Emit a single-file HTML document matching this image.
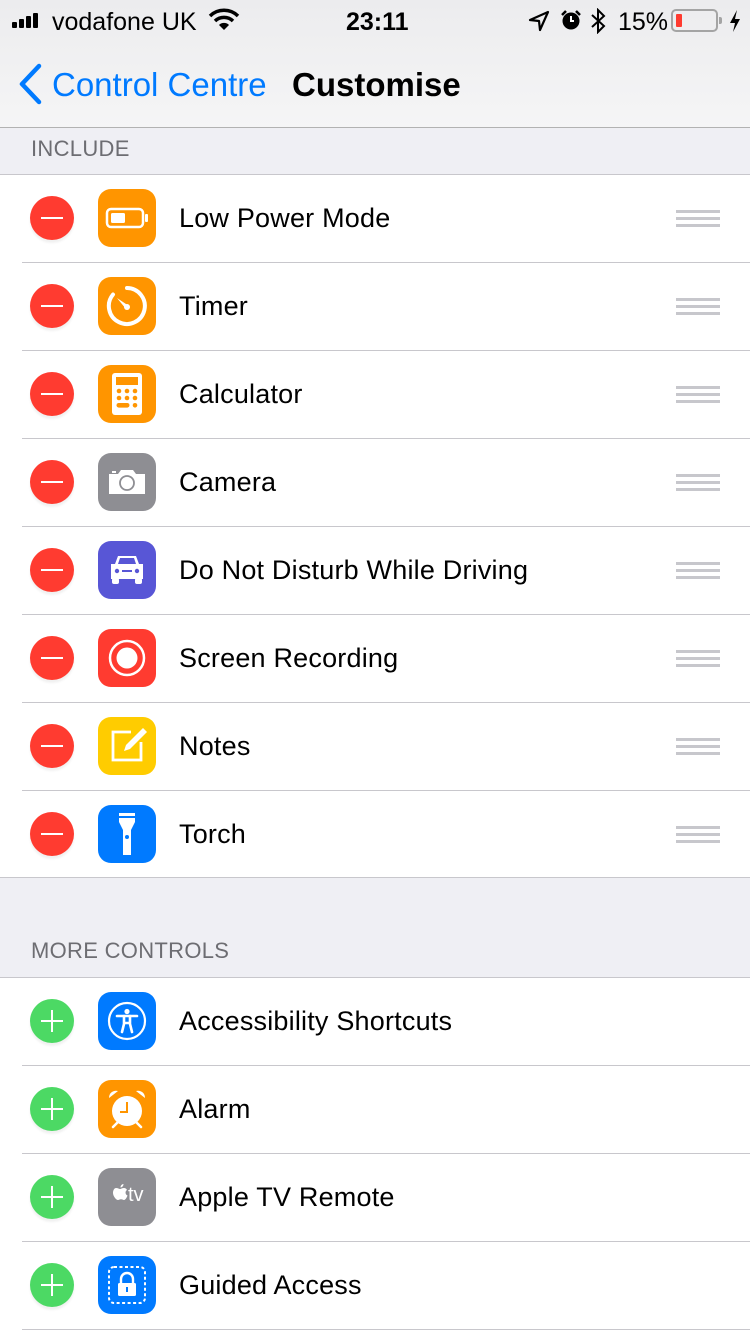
<!DOCTYPE html>
<html><head><meta charset="utf-8"><style>
*{margin:0;padding:0;box-sizing:border-box}
body{width:750px;height:1334px;overflow:hidden;position:relative;background:#efeff4;font-family:"Liberation Sans",sans-serif}
.abs{position:absolute}
.nav{left:0;top:0;width:750px;height:128px;background:linear-gradient(#ececee,#f5f5f6);border-bottom:1px solid #b2b2b2}
.sec{left:0;width:750px;background:#fff}
.row{position:absolute;left:0;width:750px;height:88px}
.row .sep{position:absolute;left:22px;right:0;bottom:0;height:1px;background:#c8c7cc}
.btn{position:absolute;left:30px;top:21px;width:44px;height:44px;border-radius:50%;box-shadow:0 3px 2px rgba(0,0,0,0.06)}
.minus{background:#ff3b30}
.minus:after{content:"";position:absolute;left:11px;top:21px;width:22px;height:2px;background:#fff}
.plus{background:#4cd964}
.plus:before{content:"";position:absolute;left:11px;top:21px;width:22px;height:2px;background:#fff}
.plus:after{content:"";position:absolute;left:21px;top:11px;width:2px;height:22px;background:#fff}
.ic{position:absolute;left:98px;top:14px;width:58px;height:58px;border-radius:13px;overflow:hidden}
.ic svg{width:58px;height:58px}
.lbl{position:absolute;left:179px;top:28px;font-size:27px;color:#000;letter-spacing:0.2px}
.drag{position:absolute;left:676px;top:35px;width:44px;height:17px;background:linear-gradient(#c7c7cc 0 3px,transparent 3px 7px,#c7c7cc 7px 10px,transparent 10px 14px,#c7c7cc 14px 17px)}
.hdr{left:31px;font-size:22px;color:#6d6d72;letter-spacing:0.3px}
</style></head><body>
<div class="abs nav"></div>
<div class="abs" style="left:12px;top:13px">
<svg width="36" height="16"><rect x="0" y="9" width="5" height="6" rx="1" fill="#000"/><rect x="7" y="6" width="5" height="9" rx="1" fill="#000"/><rect x="14" y="3" width="5" height="12" rx="1" fill="#000"/><rect x="21" y="0" width="5" height="15" rx="1" fill="#000"/></svg></div>
<div class="abs" style="left:52px;top:8px;font-size:25px;color:#000">vodafone UK</div>
<div class="abs" style="left:208px;top:8px"><svg width="32" height="24" viewBox="0 0 32 24"><path d="M2 8 A20 20 0 0 1 30 8" stroke="#000" stroke-width="3.5" fill="none"/><path d="M7 13 A13 13 0 0 1 25 13" stroke="#000" stroke-width="3.5" fill="none"/><path d="M16 22 L11 17 A7 7 0 0 1 21 17 Z" fill="#000"/></svg></div>
<div class="abs" style="left:346px;top:8px;font-size:25px;font-weight:bold;color:#000">23:11</div>
<div class="abs" style="left:528px;top:10px"><svg width="22" height="22" viewBox="0 0 22 22"><path d="M20 2 L2 10 L11 11 L12 20 Z" fill="none" stroke="#000" stroke-width="2.2" stroke-linejoin="round"/></svg></div>
<div class="abs" style="left:560px;top:9px"><svg width="22" height="22" viewBox="0 0 22 22"><circle cx="11" cy="12" r="8.5" fill="#000"/><path d="M11 7 V12 H14" stroke="#fff" stroke-width="2" fill="none"/><path d="M2 6 L6 2 M20 6 L16 2" stroke="#000" stroke-width="2.5"/></svg></div>
<div class="abs" style="left:589px;top:8px"><svg width="18" height="26" viewBox="0 0 18 26"><path d="M3 7 L15 18 L9 24 V2 L15 8 L3 19" stroke="#000" stroke-width="2" fill="none"/></svg></div>
<div class="abs" style="left:618px;top:8px;font-size:25px;color:#000">15%</div>
<div class="abs" style="left:671px;top:9px;width:47px;height:23px;border:2px solid #a4a4a4;border-radius:5px"><div style="position:absolute;left:3px;top:3px;width:6px;height:13px;background:#ff3b30;border-radius:1px"></div></div>
<div class="abs" style="left:719px;top:17px;width:3px;height:7px;background:#a4a4a4;border-radius:0 2px 2px 0"></div>
<div class="abs" style="left:728px;top:9px"><svg width="14" height="24" viewBox="0 0 14 24"><path d="M9 1 L2 14 H7 L5 23 L12 10 H7 Z" fill="#000"/></svg></div>
<div class="abs" style="left:16px;top:62px"><svg width="28" height="44" viewBox="0 0 28 44"><path d="M23 4 L6 22 L23 40" stroke="#007aff" stroke-width="4.5" fill="none" stroke-linecap="round" stroke-linejoin="round"/></svg></div>
<div class="abs" style="left:52px;top:66px;font-size:33px;color:#007aff">Control Centre</div>
<div class="abs" style="left:292px;top:66px;font-size:33px;color:#000;font-weight:bold">Customise</div>
<div class="abs hdr" style="top:136px">INCLUDE</div>
<div class="abs" style="left:0;top:174px;width:750px;height:1px;background:#c8c7cc"></div>
<div class="abs sec" style="top:175px;height:702px"></div>
<div class="abs" style="left:0;top:877px;width:750px;height:1px;background:#c8c7cc"></div>
<div class="abs hdr" style="top:938px">MORE CONTROLS</div>
<div class="abs" style="left:0;top:977px;width:750px;height:1px;background:#c8c7cc"></div>
<div class="abs sec" style="top:978px;height:356px"></div>

<div class="row" style="top:175px"><div class="btn minus"></div><div class="ic" style="background:#ff9500"><svg viewBox="0 0 58 58"><rect x="9" y="20" width="36" height="18" rx="4" fill="none" stroke="#fff" stroke-width="2.5"/><rect x="13" y="24" width="14" height="10" rx="1.5" fill="#fff"/><rect x="47" y="25" width="3" height="8" rx="1" fill="#fff"/></svg></div><div class="lbl">Low Power Mode</div><div class="drag"></div><div class="sep"></div></div>
<div class="row" style="top:263px"><div class="btn minus"></div><div class="ic" style="background:#ff9500"><svg viewBox="0 0 58 58"><path d="M29 11 A18 18 0 1 1 15 17.5" fill="none" stroke="#fff" stroke-width="4" stroke-linecap="round"/><path d="M19 21 L31 29 L28 32 Z" fill="#fff"/><circle cx="29" cy="30" r="3" fill="#fff"/></svg></div><div class="lbl">Timer</div><div class="drag"></div><div class="sep"></div></div>
<div class="row" style="top:351px"><div class="btn minus"></div><div class="ic" style="background:#ff9500"><svg viewBox="0 0 58 58"><rect x="14" y="8" width="30" height="42" rx="3" fill="#fff"/><rect x="18" y="12" width="22" height="8" fill="#ff9500"/><g fill="#ff9500"><circle cx="21" cy="26" r="2.3"/><circle cx="29" cy="26" r="2.3"/><circle cx="37" cy="26" r="2.3"/><circle cx="21" cy="33" r="2.3"/><circle cx="29" cy="33" r="2.3"/><circle cx="37" cy="33" r="2.3"/><rect x="18.5" y="38" width="13" height="4.6" rx="2.3"/><circle cx="37" cy="40.3" r="2.3"/></g></svg></div><div class="lbl">Calculator</div><div class="drag"></div><div class="sep"></div></div>
<div class="row" style="top:439px"><div class="btn minus"></div><div class="ic" style="background:#8e8e93"><svg viewBox="0 0 58 58"><path d="M11 21 H20 L23 17 H35 L38 21 H47 V41 H11 Z" fill="#fff"/><rect x="14" y="18" width="4" height="2" fill="#fff"/><circle cx="29" cy="30" r="7" fill="none" stroke="#8e8e93" stroke-width="1.8"/></svg></div><div class="lbl">Camera</div><div class="drag"></div><div class="sep"></div></div>
<div class="row" style="top:527px"><div class="btn minus"></div><div class="ic" style="background:#5856d6"><svg viewBox="0 0 58 58"><path d="M17 23 L20 15 H38 L41 23 H45 V38 H13 V23 Z" fill="#fff"/><path d="M20 23 L22 17 H36 L38 23 Z" fill="#5856d6"/><circle cx="19" cy="30" r="2.2" fill="#5856d6"/><circle cx="39" cy="30" r="2.2" fill="#5856d6"/><rect x="24" y="29" width="10" height="2" fill="#5856d6"/><rect x="14" y="37" width="7" height="6" rx="2" fill="#fff"/><rect x="37" y="37" width="7" height="6" rx="2" fill="#fff"/></svg></div><div class="lbl">Do Not Disturb While Driving</div><div class="drag"></div><div class="sep"></div></div>
<div class="row" style="top:615px"><div class="btn minus"></div><div class="ic" style="background:#ff3b30"><svg viewBox="0 0 58 58"><circle cx="29" cy="29" r="17" fill="none" stroke="#fff" stroke-width="2.5"/><circle cx="29" cy="29" r="10.5" fill="#fff"/></svg></div><div class="lbl">Screen Recording</div><div class="drag"></div><div class="sep"></div></div>
<div class="row" style="top:703px"><div class="btn minus"></div><div class="ic" style="background:#ffcc00"><svg viewBox="0 0 58 58"><path d="M33 15 H15 V43 H43 V25" fill="none" stroke="#fff" stroke-width="2.8"/><path d="M45 11 L49 15 L32 32 L26 34 L28 28 Z" fill="#fff"/></svg></div><div class="lbl">Notes</div><div class="drag"></div><div class="sep"></div></div>
<div class="row" style="top:791px"><div class="btn minus"></div><div class="ic" style="background:#007aff"><svg viewBox="0 0 58 58"><rect x="21" y="8" width="16" height="3" fill="#fff"/><path d="M21 13 H37 V17 L33 25 V50 H25 V25 L21 17 Z" fill="#fff"/><circle cx="29" cy="32" r="2" fill="#007aff"/></svg></div><div class="lbl">Torch</div><div class="drag"></div></div>

<div class="row" style="top:978px"><div class="btn plus"></div><div class="ic" style="background:#007aff"><svg viewBox="0 0 58 58"><circle cx="29" cy="29" r="18" fill="none" stroke="#fff" stroke-width="2.2"/><circle cx="29" cy="19.5" r="2.6" fill="#fff"/><path d="M19 24 L39 24" stroke="#fff" stroke-width="2.6" stroke-linecap="round"/><path d="M26 24 V32 L24 40 M32 24 V32 L34 40 M26 31 H32" stroke="#fff" stroke-width="2.6" fill="none" stroke-linecap="round"/></svg></div><div class="lbl">Accessibility Shortcuts</div><div class="sep"></div></div>
<div class="row" style="top:1066px"><div class="btn plus"></div><div class="ic" style="background:#ff9500"><svg viewBox="0 0 58 58"><circle cx="29" cy="31" r="15" fill="#fff"/><path d="M29 22 V32 H22" stroke="#ff9500" stroke-width="2" fill="none"/><path d="M11 18 A7 7 0 0 1 20 11 Z M47 18 A7 7 0 0 0 38 11 Z" fill="#fff"/><path d="M19 43 L15 47 M39 43 L43 47" stroke="#fff" stroke-width="2.5" stroke-linecap="round"/></svg></div><div class="lbl">Alarm</div><div class="sep"></div></div>
<div class="row" style="top:1154px"><div class="btn plus"></div><div class="ic" style="background:#8e8e93"><svg viewBox="0 0 58 58"><path d="M18 20 C20 20 21 21 22 21 C23 21 24 20 26 20 C27.5 20 28.5 21 29 22 C27 23 27 26.5 29.5 27.5 C29 29 27.5 32 26 32 C25 32 24.5 31.3 23 31.3 C21.5 31.3 21 32 20 32 C18 32 15 28 15 25 C15 22 16.5 20 18 20 Z M22.5 19.5 C22.5 17.5 24 16 25.5 16 C25.5 18 24 19.5 22.5 19.5 Z" fill="#fff"/><text x="30" y="33" font-family="Liberation Sans,sans-serif" font-size="20" fill="#fff">tv</text></svg></div><div class="lbl">Apple TV Remote</div><div class="sep"></div></div>
<div class="row" style="top:1242px"><div class="btn plus"></div><div class="ic" style="background:#007aff"><svg viewBox="0 0 58 58"><rect x="11" y="11" width="36" height="36" rx="5" fill="none" stroke="#fff" stroke-width="2" stroke-dasharray="3 2.5"/><rect x="20" y="27" width="18" height="13" rx="1.5" fill="#fff"/><path d="M23 27 V23 A6 6 0 0 1 35 23 V27" stroke="#fff" stroke-width="2.4" fill="none"/><rect x="28" y="31" width="2" height="5" fill="#007aff"/></svg></div><div class="lbl">Guided Access</div><div class="sep"></div></div>
</body></html>
